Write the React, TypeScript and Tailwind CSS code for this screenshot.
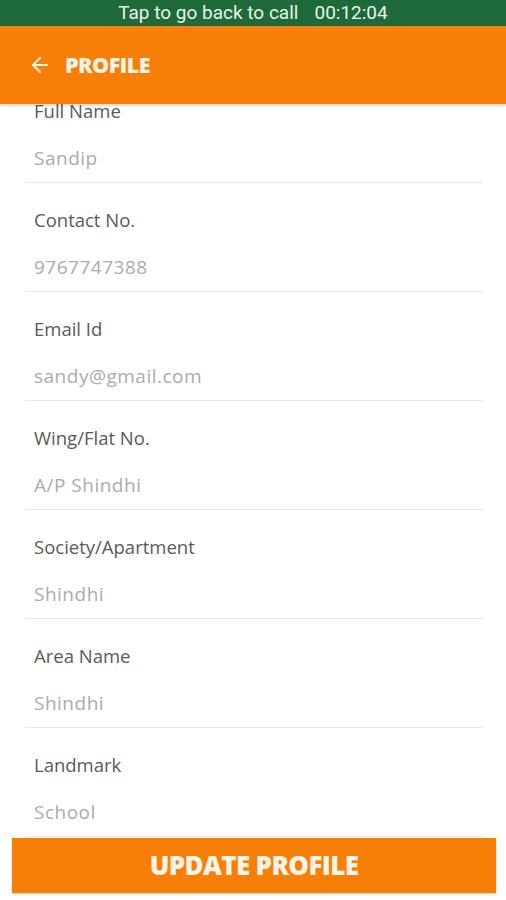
import { ArrowLeft } from "lucide-react";

const fields = [
  { label: "Full Name", value: "Sandip" },
  { label: "Contact No.", value: "9767747388" },
  { label: "Email Id", value: "sandy@gmail.com" },
  { label: "Wing/Flat No.", value: "A/P Shindhi" },
  { label: "Society/Apartment", value: "Shindhi" },
  { label: "Area Name", value: "Shindhi" },
  { label: "Landmark", value: "School" },
];

const Field = ({ label, value }: { label: string; value: string }) => {
  return (
    <div className="ml-[25px] mr-[23px] border-b border-[#e9e9e9] pl-[9px] pt-[25px] pb-[12px]">
      <div className="h-[24px] font-['Open_Sans',sans-serif] text-[18.5px] leading-[24px] text-[#5a5a5a]">
        {label}
      </div>
      <div className="mt-[23px] h-[24px] font-['Open_Sans',sans-serif] text-[19px] leading-[24px] tracking-[0.5px] text-[#ababab]">
        {value}
      </div>
    </div>
  );
};

export default function App() {
  return (
    <div className="flex h-[900px] w-[506px] flex-col overflow-hidden bg-white">
      <div className="relative z-10 flex h-[26px] items-center justify-center bg-[#1f6a3b] font-['Roboto',sans-serif] text-[19px] text-[#e6f5e6]">
        <span>Tap to go back to call</span>
        <span className="ml-[16px]">00:12:04</span>
      </div>
      <header className="relative z-10 flex h-[78px] items-center bg-[#f77f07] pl-[28px] shadow-[0_2px_3px_rgba(0,0,0,0.15)]">
        <ArrowLeft className="h-[24px] w-[24px] text-[#fdf3e6]" strokeWidth={2} />
        <h1 className="ml-[13px] font-['Open_Sans',sans-serif] text-[21.5px] font-extrabold tracking-tight text-[#fdf3e6]">
          PROFILE
        </h1>
      </header>
      <main className="-mt-[30px] flex flex-col">
        {fields.map((f) => (
          <Field key={f.label} label={f.label} value={f.value} />
        ))}
      </main>
      <button className="ml-[12px] mr-[10px] mt-[1px] h-[55px] bg-[#f77f07] font-['Open_Sans',sans-serif] text-[26px] font-extrabold tracking-tight text-[#fdf3e6] shadow-[0_1px_2px_rgba(0,0,0,0.2)]">
        UPDATE PROFILE
      </button>
    </div>
  );
}
